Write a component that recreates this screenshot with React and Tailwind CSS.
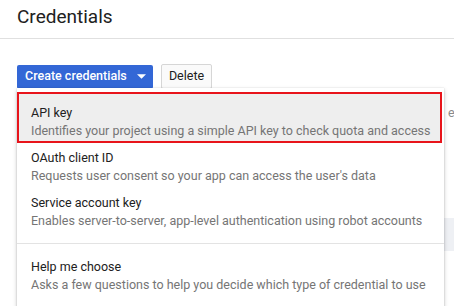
import { useState } from 'react'

const items = [
  { title: 'API key', desc: 'Identifies your project using a simple API key to check quota and access' },
  { title: 'OAuth client ID', desc: "Requests user consent so your app can access the user's data" },
  { title: 'Service account key', desc: 'Enables server-to-server, app-level authentication using robot accounts' },
]

function MenuItem({ title, desc, active }) {
  if (active) {
    return (
      <div className="mr-[2px] border-2 border-[#e8141b] bg-[#eeeeee] pb-[1px] pl-[12px] pt-[10px]">
        <div className="whitespace-nowrap text-[12.5px] leading-[18px] text-[#212121]">{title}</div>
        <div className="whitespace-nowrap text-[12.5px] leading-[18px] text-[#757575]">{desc}</div>
      </div>
    )
  }
  return (
    <div className="pb-[3px] pl-[14px] pt-[6px]">
      <div className="whitespace-nowrap text-[12.5px] leading-[18px] text-[#212121]">{title}</div>
      <div className="whitespace-nowrap text-[12.5px] leading-[18px] text-[#757575]">{desc}</div>
    </div>
  )
}

export default function App() {
  const [open] = useState(true)

  return (
    <div className="relative h-[306px] w-[454px] overflow-hidden bg-white font-['Roboto',sans-serif]">
      <div className="flex h-[39px] items-center border-b border-[#e0e0e0] px-[17px] pb-[4px]">
        <h1 className="text-[19px] leading-[24px] text-[#212121]">Credentials</h1>
      </div>

      <div className="flex items-center gap-[8px] px-[17px] pt-[25px]">
        <button
          type="button"
          className="flex h-[24px] w-[136px] items-center rounded-[2px] bg-[#3367d6] pl-[8px] text-[12.5px] font-medium text-white"
        >
          Create credentials
          <svg viewBox="0 0 10 5" className="ml-[10px] h-[5px] w-[9px]" fill="currentColor">
            <path d="M0 0h10L5 5z" />
          </svg>
        </button>
        <button
          type="button"
          className="h-[25px] w-[51px] rounded-[2px] border border-[#d6d6d6] bg-[#fafafa] text-[12.5px] text-[#212121]"
        >
          Delete
        </button>
      </div>

      <div className="mt-[5px]">
        <div className="flex justify-end pt-[10px]">
          <span className="w-[6px] overflow-hidden text-[12.5px] leading-[18px] text-[#8a8a8a]">e</span>
        </div>
        <div className="ml-auto mt-[96px] h-[33px] w-[10px] bg-[#eef0f4]" />
      </div>

      {open ? (
        <div className="absolute left-[17px] top-[88px] h-[240px] w-[427px] bg-white pt-[4px] shadow-[0_2px_4px_rgba(0,0,0,0.25),0_0_1px_rgba(0,0,0,0.2)]">
          <MenuItem {...items[0]} active />
          <MenuItem {...items[1]} />
          <MenuItem {...items[2]} />
          <div className="mt-[10px] border-t border-[#e3e3e3]" />
          <div className="pl-[14px] pt-[14px]">
            <div className="whitespace-nowrap text-[12.5px] leading-[18px] text-[#212121]">Help me choose</div>
            <div className="whitespace-nowrap text-[12.5px] leading-[18px] text-[#757575]">
              Asks a few questions to help you decide which type of credential to use
            </div>
          </div>
        </div>
      ) : null}
    </div>
  )
}
